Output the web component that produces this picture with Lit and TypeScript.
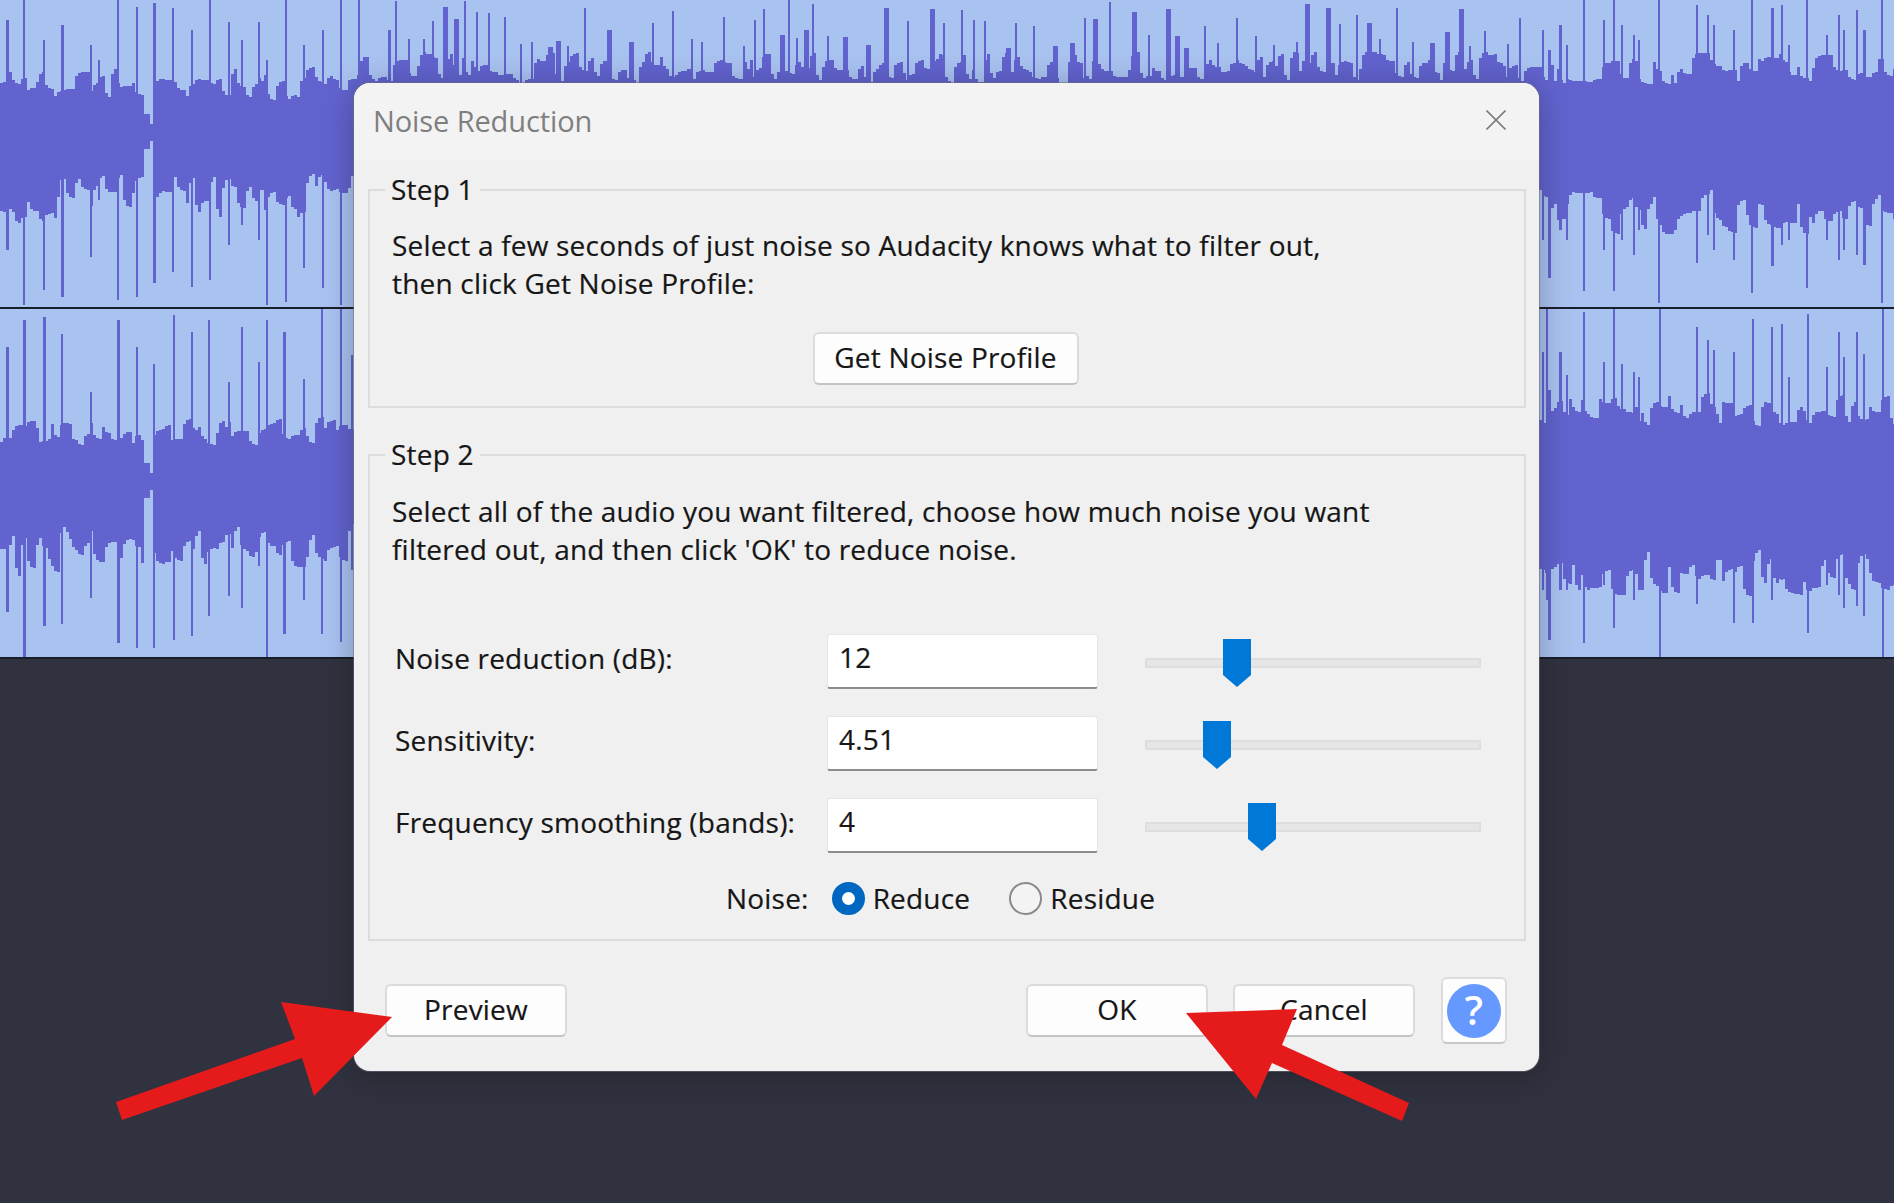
import { LitElement, html, css, svg } from "lit";
import { customElement } from "lit/decorators.js";

type Spike = [number, number, number]; // x, top y of spike, bottom y of spike

const T1: Spike[] = [
  [6, 20, 250], [23, 0, 305], [43, 40, 290], [61, 25, 297], [90, 45, 257], [98, 60, 200], [117, 0, 300], [136, 7, 297],
  [153, 3, 283], [172, 8, 272], [191, 30, 287], [209, 0, 280], [228, 22, 245], [241, 40, 225], [258, 22, 240], [266, 60, 305],
  [285, 0, 302], [303, 45, 268], [322, 30, 288], [340, 0, 305], [358, 0, 240], [388, 30, 280],
  [1542, 30, 240], [1548, 50, 278], [1559, 25, 230], [1566, 45, 240], [1583, 0, 291], [1603, 20, 250], [1613, 0, 291], [1621, 25, 240],
  [1633, 35, 255], [1638, 40, 230], [1658, 0, 303], [1696, 5, 263], [1707, 15, 235], [1713, 25, 250], [1733, 30, 260], [1751, 0, 293],
  [1771, 8, 266], [1781, 5, 245], [1788, 45, 240], [1806, 0, 288], [1826, 35, 240], [1838, 15, 260], [1843, 30, 250], [1856, 10, 255],
  [1863, 30, 265], [1881, 0, 303]
];
const T2: Spike[] = [
  [6, 347, 612], [23, 320, 657], [43, 317, 626], [61, 334, 624], [90, 392, 598], [117, 320, 643], [136, 347, 648], [153, 364, 648],
  [173, 315, 640], [191, 332, 636], [208, 320, 616], [228, 382, 596], [241, 327, 608], [258, 362, 566], [266, 320, 657], [283, 332, 634],
  [303, 379, 600], [321, 309, 634], [340, 309, 642], [351, 355, 570],
  [1542, 352, 590], [1546, 309, 600], [1548, 390, 640], [1559, 352, 590], [1566, 375, 590], [1583, 312, 643], [1603, 362, 585], [1613, 308, 628],
  [1621, 364, 580], [1633, 372, 600], [1638, 377, 580], [1659, 308, 657], [1696, 327, 604], [1707, 340, 570], [1713, 350, 575], [1733, 352, 623],
  [1752, 319, 623], [1771, 327, 600], [1781, 324, 580], [1788, 377, 575], [1807, 314, 633], [1826, 367, 585], [1838, 332, 595], [1843, 357, 608],
  [1856, 332, 606], [1863, 354, 616], [1882, 308, 657]
];

function rng(seed: number) {
  return () => {
    seed |= 0;
    seed = (seed + 0x6d2b79f5) | 0;
    let t = Math.imul(seed ^ (seed >>> 15), 1 | seed);
    t = (t + Math.imul(t ^ (t >>> 7), 61 | t)) ^ t;
    return ((t ^ (t >>> 14)) >>> 0) / 4294967296;
  };
}

function wavePath(cy: number, spikes: Spike[], seed: number, h: number, extraTop: boolean, boost: number): string {
  const r = rng(seed);
  let d = "";
  let u = 0, d0 = 0, tu = 0, td = 0, hold = 0;
  const column = (x: number, w: number, top: number, bot: number) => {
    d += `M${x} ${Math.max(0, Math.round(top))}h${w}V${Math.min(h, Math.round(bot))}h${-w}z`;
  };
  for (let x = 0; x < 1894; x += 3) {
    const right = x > 1500;
    const mid = x >= 355 && !right;
    if (hold-- <= 0) {
      hold = Math.floor(r() * 3);
      tu = (r() - 0.45) * 34;
      td = (r() - 0.45) * 48;
    }
    u += (tu - u) * 0.75;
    d0 += (td - d0) * 0.75;
    let up = (right ? 62 + boost : mid ? 64 : 48) + u;
    let down = (right ? 76 + boost * 1.4 : 60) + d0;
    if (!right && x < 60) down += 12;
    if (!right && x >= 142 && x < 153) {
      up = x < 148 ? 19 : 9;
      down = x < 150 ? 16 : 8;
    }
    column(x, 3, cy - up, cy + down);
  }
  for (const [x, top, bot] of spikes) {
    column(x, r() < 0.25 ? 3 : 2, top, bot);
  }
  if (extraTop) {
    for (let x = 395; x < 1540; x += 8 + Math.floor(r() * 16)) {
      column(x, r() < 0.3 ? 5 : 2, r() * 48, 100);
    }
  }
  return d;
}

const PATH1 = wavePath(133, T1, 11, 307, true, 0);
const PATH2 = wavePath(173, T2.map(([x, t, b]) => [x, t - 309, b - 309] as Spike), 29, 348, false, 9);

const ROWS = [
  { label: "Noise reduction (dB):", value: "12", thumb: 78 },
  { label: "Sensitivity:", value: "4.51", thumb: 58 },
  { label: "Frequency smoothing (bands):", value: "4", thumb: 103 }
];

@customElement("app-root")
export class AppRoot extends LitElement {
  static styles = css`
    :host {
      display: block;
      position: relative;
      width: 1894px;
      height: 1203px;
      overflow: hidden;
      background: #30323f;
      font-family: "Open Sans", "Noto Sans", "Liberation Sans", sans-serif;
      color: #161616;
      font-size: 28px;
      letter-spacing: 0.2px;
    }
    .track {
      display: block;
      background: #a9c3f1;
      border-bottom: 2px solid #1a1d2a;
    }
    .track svg {
      display: block;
    }
    .wave {
      fill: #6263cf;
    }
    .dialog {
      position: absolute;
      left: 354px;
      top: 83px;
      width: 1185px;
      box-sizing: border-box;
      background: #f0f0f0;
      border-radius: 16px;
      box-shadow: 0 0 0 1px rgba(110, 110, 120, 0.55), 0 4px 34px rgba(0, 0, 0, 0.28);
      overflow: hidden;
    }
    .titlebar {
      height: 77px;
      background: #f3f3f3;
      display: flex;
      align-items: center;
      justify-content: space-between;
      padding: 0 33px 0 19px;
      box-sizing: border-box;
    }
    .title {
      color: #7f7f7f;
      font-size: 29px;
      letter-spacing: -0.1px;
      margin-top: -2px;
    }
    .close {
      display: block;
      width: 20px;
      height: 20px;
      margin-top: -4px;
      stroke: #7d7d7d;
      stroke-width: 1.6;
      fill: none;
    }
    .body {
      padding: 12px 13px 0 14px;
      -webkit-text-stroke: 0.2px #161616;
    }
    fieldset {
      margin: 0;
      border: 2px solid #dcdcdc;
      box-sizing: border-box;
      min-width: 0;
    }
    legend {
      margin-left: -7px;
      padding: 0 6px;
      line-height: 34px;
      height: 36px;
    }
    .step1 {
      height: 236px;
      padding: 19px 22px 0;
    }
    .step2 {
      height: 504px;
      margin-top: 29px;
      padding: 20px 22px 0;
    }
    .text {
      line-height: 37.5px;
      white-space: pre-line;
    }
    .center {
      display: flex;
      justify-content: center;
      margin-top: 30px;
      padding-right: 3px;
    }
    .btn {
      box-sizing: border-box;
      height: 53px;
      background: #fdfdfd;
      border: 2px solid #dcdcdc;
      border-bottom-color: #c4c4c4;
      border-radius: 6px;
      display: flex;
      align-items: center;
      justify-content: center;
      padding-bottom: 3px;
    }
    .profile {
      width: 266px;
    }
    .rows {
      margin-top: 66px;
      display: grid;
      gap: 27px;
    }
    .row {
      display: grid;
      grid-template-columns: 432px 271px 47px 336px;
      align-items: center;
      padding-left: 3px;
    }
    .row-label {
      padding-bottom: 8px;
    }
    .input {
      box-sizing: border-box;
      height: 55px;
      background: #fff;
      border: 1px solid #e6e6e6;
      border-bottom: 2px solid #8c8c8c;
      border-radius: 3px;
      padding-left: 11px;
      line-height: 45px;
    }
    .slider {
      grid-column: 4;
      position: relative;
      height: 48px;
      margin-top: 3px;
      display: flex;
      align-items: center;
    }
    .rail {
      width: 100%;
      height: 10px;
      box-sizing: border-box;
      background: #e6e6e6;
      border: 2px solid #dedede;
    }
    .thumb {
      position: absolute;
      top: 0;
      width: 28px;
      height: 48px;
      fill: #0078d7;
      display: block;
    }
    .noise {
      display: flex;
      align-items: center;
      height: 40px;
      margin-top: 25px;
      padding-left: 334px;
    }
    .noise-label {
      margin-right: 23px;
    }
    .radio {
      display: flex;
      align-items: center;
      gap: 8px;
    }
    .radio + .radio {
      margin-left: 39px;
    }
    .dot {
      box-sizing: border-box;
      width: 33px;
      height: 33px;
      border-radius: 50%;
      border: 2.5px solid #8a8a8a;
      background: #f3f3f3;
    }
    .dot.on {
      border: 10px solid #0067c0;
      background: #fff;
    }
    .footer {
      display: flex;
      align-items: center;
      height: 67px;
      margin: 36px 32px 27px 31px;
      -webkit-text-stroke: 0.2px #161616;
    }
    .push {
      width: 182px;
    }
    .ok {
      margin-left: auto;
    }
    .cancel {
      margin-left: 25px;
    }
    .help {
      box-sizing: border-box;
      margin-left: 26px;
      width: 66px;
      height: 67px;
      background: #fdfdfd;
      border: 2px solid #dcdcdc;
      border-bottom-color: #c8c8c8;
      border-radius: 6px;
      display: flex;
      align-items: center;
      justify-content: center;
      -webkit-text-stroke: 0;
    }
    .q {
      width: 54px;
      height: 54px;
      border-radius: 50%;
      background: #6699ff;
      color: #fff;
      font-size: 40px;
      font-weight: 600;
      line-height: 52px;
      text-align: center;
    }
    .arrows {
      position: absolute;
      left: 0;
      top: 0;
      width: 1894px;
      height: 1203px;
      pointer-events: none;
    }
    .arrows polygon {
      fill: #e51b1b;
    }
  `;

  render() {
    return html`
      <div class="track">
        <svg width="1894" height="307" viewBox="0 0 1894 307" shape-rendering="crispEdges">
          ${svg`<path class="wave" d=${PATH1}></path>`}
        </svg>
      </div>
      <div class="track">
        <svg width="1894" height="348" viewBox="0 0 1894 348" shape-rendering="crispEdges">
          ${svg`<path class="wave" d=${PATH2}></path>`}
        </svg>
      </div>

      <div class="dialog">
        <div class="titlebar">
          <span class="title">Noise Reduction</span>
          <svg class="close" viewBox="0 0 20 20"><path d="M0.5 0.5 19.5 19.5M19.5 0.5 0.5 19.5"></path></svg>
        </div>
        <div class="body">
          <fieldset class="step1">
            <legend>Step 1</legend>
            <div class="text">Select a few seconds of just noise so Audacity knows what to filter out,
then click Get Noise Profile:</div>
            <div class="center"><div class="btn profile">Get Noise Profile</div></div>
          </fieldset>
          <fieldset class="step2">
            <legend>Step 2</legend>
            <div class="text">Select all of the audio you want filtered, choose how much noise you want
filtered out, and then click 'OK' to reduce noise.</div>
            <div class="rows">
              ${ROWS.map(
                (r) => html`
                  <div class="row">
                    <span class="row-label">${r.label}</span>
                    <div class="input">${r.value}</div>
                    <div class="slider">
                      <div class="rail"></div>
                      <svg class="thumb" style="left:${r.thumb}px" viewBox="0 0 28 48">
                        <path d="M0 0H28V36L14 48 0 36Z"></path>
                      </svg>
                    </div>
                  </div>
                `
              )}
            </div>
            <div class="noise">
              <span class="noise-label">Noise:</span>
              <div class="radio"><span class="dot on"></span><span>Reduce</span></div>
              <div class="radio"><span class="dot"></span><span>Residue</span></div>
            </div>
          </fieldset>
        </div>
        <div class="footer">
          <div class="btn push">Preview</div>
          <div class="btn push ok">OK</div>
          <div class="btn push cancel">Cancel</div>
          <div class="help"><div class="q">?</div></div>
        </div>
      </div>

      <svg class="arrows" viewBox="0 0 1894 1203">
        <polygon points="116,1102 122,1120 302,1058 314,1096 392,1017 281,1002 295,1039"></polygon>
        <polygon points="1186,1013 1297,1009 1282,1045 1409,1103 1402,1121 1272,1063 1256,1099"></polygon>
      </svg>
    `;
  }
}
